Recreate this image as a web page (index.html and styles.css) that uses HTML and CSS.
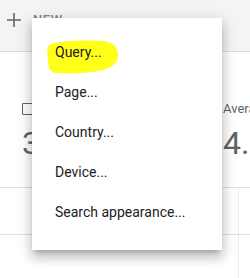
FILE: index.html
```html
<!DOCTYPE html>
<html>
<head>
  <meta charset="UTF-8">
  <title>Performance filters</title>
  <link rel="stylesheet" href="styles.css">
</head>
<body>
  <div class="toolbar">
    <svg class="plus" width="14" height="14" viewBox="0 0 14 14">
      <path d="M7 0v14M0 7h14" stroke="#5f6368" stroke-width="1.6" fill="none"/>
    </svg>
    <span class="new-label">NEW</span>
  </div>

  <div class="cards">
    <div class="card card-clicks">
      <div class="card-label"><span class="checkbox"></span>Total clicks</div>
      <div class="card-value">3</div>
    </div>
    <div class="card card-position">
      <div class="card-label">Average position</div>
      <div class="card-value">4.8</div>
    </div>
  </div>

  <div class="table">
    <div class="table-row"><div class="cell"></div><div class="cell cell-side"></div></div>
    <div class="table-row"><div class="cell"></div><div class="cell cell-side"></div></div>
  </div>

  <!-- Dropdown opened from the NEW button -->
  <ul class="menu">
    <li class="menu-item">
      <svg class="highlight" width="72" height="34" viewBox="0 0 72 34">
        <path d="M2 5 C12 0 40 0 56 1 C67 2 71 8 71 15 C71 22 66 27 56 30 C44 33 26 34 8 33 C3 32 1 27 1 20 C0 14 0 8 2 5 Z" fill="#ffff1a"/>
      </svg>
      <span class="menu-text">Query...</span>
    </li>
    <li class="menu-item"><span class="menu-text">Page...</span></li>
    <li class="menu-item"><span class="menu-text">Country...</span></li>
    <li class="menu-item"><span class="menu-text">Device...</span></li>
    <li class="menu-item"><span class="menu-text">Search appearance...</span></li>
  </ul>
</body>
</html>
```

FILE: styles.css
```css
/* Base */
body {
  margin: 0;
  font-family: Roboto, "Noto Sans", sans-serif;
  background: #fff;
  color: #202124;
  position: relative;
  overflow: hidden;
}
/* Toolbar with the NEW button */
.toolbar {
  height: 52px;
  background: #f4f4f4;
  border-bottom: 1px solid #dcdcdc;
  display: flex;
  align-items: flex-start;
  box-sizing: border-box;
  padding: 12px 0 0 7px;
}
.plus {
  display: block;
  margin-top: 1px;
}
.new-label {
  margin-left: 12px;
  font-size: 13px;
  font-weight: 500;
  letter-spacing: 0.6px;
  color: #80868b;
  line-height: 16px;
}
/* Summary cards */
.cards {
  display: flex;
  padding-top: 49px;
}
.card-clicks {
  flex: 0 0 201px;
  padding-left: 22px;
}
.card-position {
  flex: 1 1 auto;
  min-width: 0;
}
.card-label {
  display: flex;
  align-items: center;
  font-size: 13px;
  line-height: 16px;
  color: #5f6368;
  white-space: nowrap;
}
.checkbox {
  width: 10px;
  height: 10px;
  border: 1.5px solid #5f6368;
  border-radius: 1px;
  margin-right: 8px;
}
.card-value {
  margin-top: 7px;
  font-size: 32px;
  line-height: 38px;
  color: #5f6368;
}
/* Table rows below */
.table {
  margin-top: 25px;
}
.table-row {
  display: grid;
  grid-template-columns: 238px 1fr;
  height: 47px;
  border-top: 1px solid #e0e0e0;
  box-sizing: border-box;
}
.cell-side {
  border-left: 1px solid #ececec;
}
/* Dropdown menu */
.menu {
  position: absolute;
  left: 32px;
  top: 18px;
  width: 190px;
  margin: 0;
  padding: 14px 0 18px;
  list-style: none;
  background: #fff;
  box-shadow: 0 8px 10px 1px rgba(0,0,0,0.14), 0 3px 14px 2px rgba(0,0,0,0.12), 0 5px 5px -3px rgba(0,0,0,0.2);
}
.menu-item {
  position: relative;
  height: 40px;
  line-height: 40px;
  padding-left: 23px;
  font-size: 14px;
  color: #202124;
  white-space: nowrap;
}
.menu-text {
  position: relative;
}
.highlight {
  position: absolute;
  left: 15px;
  top: 8px;
}
```
